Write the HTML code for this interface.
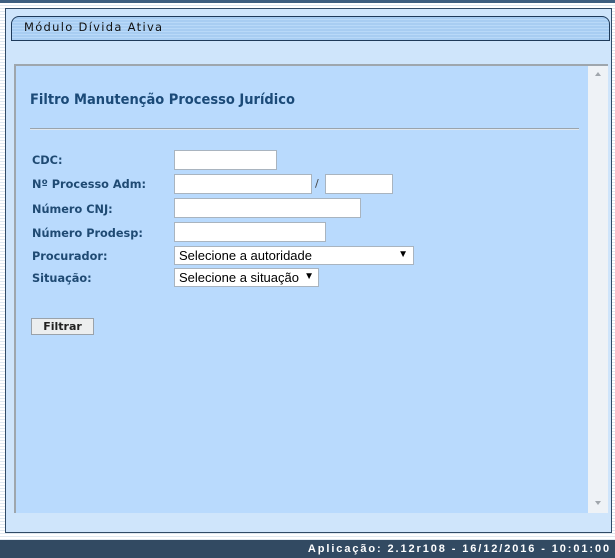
<!DOCTYPE html>
<html><head><meta charset="utf-8"><style>
*{margin:0;padding:0;box-sizing:border-box}
body{width:615px;height:558px;overflow:hidden;background:#fff;font-family:Verdana,"DejaVu Sans",sans-serif;position:relative;background:repeating-linear-gradient(#fff 0 2px,#dfe8f0 2px 3px)}
.abs{position:absolute}
#top{left:0;top:0;width:615px;height:3px;background:#3e5f80}
#outer{left:5px;top:8px;width:607px;height:525px;border:1px solid #2f4a66;background:#cfe5fb}
#tab{left:11px;top:16px;width:599px;height:25px;border:1px solid #1e3a5a;border-radius:8px 8px 0 0;background:repeating-linear-gradient(#a8cdf2 0 2px,#b9d9f8 2px 3px);font-size:11.5px;letter-spacing:1.3px;color:#111;padding:3px 0 0 12px}
#inner{left:14px;top:64px;width:594px;height:449px;border-top:2px solid #9ea6ad;border-left:2px solid #9ea6ad;background:#b9dafd}
#sb{left:588px;top:66px;width:20px;height:447px;background:#eef2f6}
#title{left:30px;top:92px;font-size:14.5px;font-weight:bold;color:#1b4a78;font-family:"DejaVu Sans Condensed","DejaVu Sans",sans-serif}
#hr{left:30px;top:128px;width:549px;height:2px;background:#9aa4ad;border-bottom:1px solid #e0e8f0}
.lab{position:absolute;left:32px;font-size:11.3px;font-weight:bold;color:#1f4a73}
.in{position:absolute;background:#fff;border:1px solid #a9b4bf;height:20px}
.sel{position:absolute;background:#fff;border:1px solid #a9b4bf;height:19px;font-family:"Liberation Sans",Arial,sans-serif;font-size:13px;color:#000;padding:1px 0 0 4px}
.sel span{position:absolute;right:5px;top:2px;font-size:10px}
#btn{left:31px;top:318px;width:63px;height:17px;border:1px solid #9aa2aa;background:#eceeef;font-size:11px;font-weight:bold;color:#222;text-align:center;line-height:15px}
#foot{left:0;top:540px;width:615px;height:18px;background:#324a62;color:#fff;font-family:"Liberation Sans",Arial,sans-serif;font-weight:bold;font-size:11px;letter-spacing:1.9px;text-align:right;padding:3px 4px 0 0}
</style></head><body>
<div class="abs" id="top"></div>
<div class="abs" id="outer"></div>
<div class="abs" id="tab">Módulo Dívida Ativa</div>
<div class="abs" id="inner"></div>
<div class="abs" id="sb"><div style="position:absolute;left:7px;top:6px;border:3px solid transparent;border-bottom:4px solid #a0a6ac;border-top:0"></div><div style="position:absolute;left:7px;top:435px;border:3px solid transparent;border-top:4px solid #a0a6ac;border-bottom:0"></div></div>
<div class="abs" id="title">Filtro Manutenção Processo Jurídico</div>
<div class="abs" id="hr"></div>
<div class="lab" style="top:154px">CDC:</div>
<div class="lab" style="top:178px">Nº Processo Adm:</div>
<div class="lab" style="top:203px">Número CNJ:</div>
<div class="lab" style="top:227px">Número Prodesp:</div>
<div class="lab" style="top:250px">Procurador:</div>
<div class="lab" style="top:272px">Situação:</div>
<div class="in" style="left:174px;top:150px;width:103px"></div>
<div class="in" style="left:174px;top:174px;width:138px"></div>
<div class="abs" style="left:315px;top:177px;font-size:11px;color:#444">/</div>
<div class="in" style="left:325px;top:174px;width:68px"></div>
<div class="in" style="left:174px;top:198px;width:187px"></div>
<div class="in" style="left:174px;top:222px;width:152px"></div>
<div class="sel" style="left:174px;top:246px;width:240px">Selecione a autoridade<span>▼</span></div>
<div class="sel" style="left:174px;top:268px;width:145px">Selecione a situação<span style="right:4px">▼</span></div>
<div class="abs" id="btn">Filtrar</div>
<div class="abs" id="foot">Aplicação: 2.12r108 - 16/12/2016 - 10:01:00</div>
</body></html>
